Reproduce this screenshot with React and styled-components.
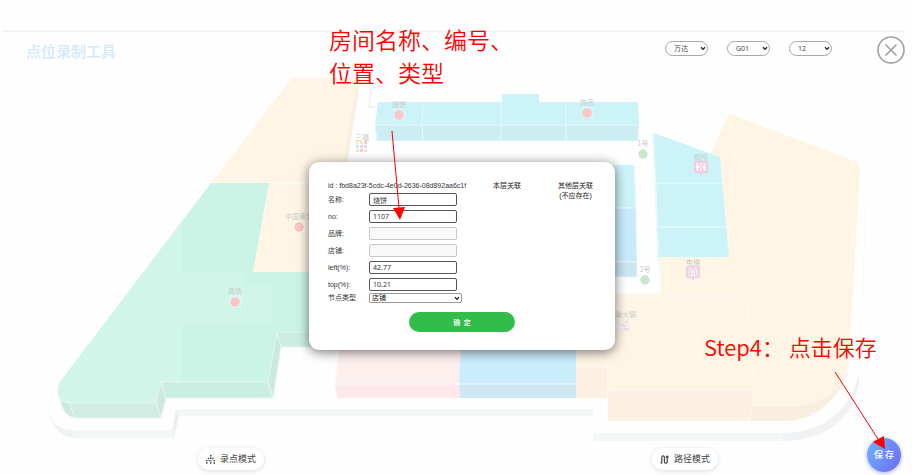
import React from "react";
import styled, { createGlobalStyle, css } from "styled-components";

const GlobalStyle = createGlobalStyle`
  *, *::before, *::after { box-sizing: border-box; }
  body {
    margin: 0;
    background: #fefefe;
    font-family: "Liberation Sans", "Noto Sans CJK SC", sans-serif;
  }
`;

const Page = styled.div`
  position: relative;
  display: flex;
  flex-direction: column;
  min-height: 100vh;
  overflow: hidden;
`;

const layer = css`
  position: absolute;
  inset: 0;
  width: 100%;
  height: 100%;
`;

const FloorMap = styled.svg`
  ${layer}
  font-family: "Noto Sans CJK SC", sans-serif;
  font-size: 7px;
`;

const Arrows = styled.svg`
  ${layer}
  pointer-events: none;
`;

const TopStrip = styled.div`
  height: 32px;
  margin: 0 7px 0 2px;
  border-bottom: 2px solid #f4f4f4;
`;

const Header = styled.header`
  position: relative;
  display: flex;
  align-items: center;
  height: 36px;
  padding: 0 7px 0 26px;
`;

const Title = styled.h1`
  margin: 0 auto 0 0;
  padding-top: 2px;
  font: 500 15px/20px "Noto Sans CJK SC", sans-serif;
  color: #d2e9fc;
`;

const Filters = styled.div`
  display: flex;
  gap: 19px;
  margin-right: 45px;
  padding-bottom: 3px;
`;

const SelectBox = styled.div`
  display: grid;
  align-items: center;
  width: ${(p) => p.$width}px;

  > * { grid-area: 1 / 1; }
  > svg {
    justify-self: end;
    margin-right: 2px;
    pointer-events: none;
  }
`;

const Select = styled.select`
  appearance: none;
  width: 100%;
  height: ${(p) => (p.$pill ? 15 : 10)}px;
  margin: 0;
  padding: 0 10px 0 ${(p) => (p.$pill ? 8 : 2)}px;
  border: 1px solid ${(p) => (p.$pill ? "#a8a8a8" : "#999")};
  border-radius: ${(p) => (p.$pill ? 8 : 2)}px;
  background: #fff;
  color: ${(p) => (p.$pill ? "#444" : "#111")};
  font: 7px/8px "Noto Sans", "Noto Sans CJK SC", sans-serif;
`;

const CloseButton = styled.button`
  display: grid;
  width: 28px;
  height: 28px;
  padding: 0;
  border: 0;
  background: none;
`;

const Main = styled.main`
  position: relative;
  display: flex;
  flex: 1;
  align-items: center;
  justify-content: center;
  padding: 0 0 4px 12px;
`;

const Dialog = styled.form`
  display: flex;
  flex-direction: column;
  width: 306px;
  padding: 19px 19px 18px;
  border-radius: 10px;
  background: #fff;
  box-shadow: 0 2px 12px rgba(0, 0, 0, 0.55);
  color: #333;
  font-size: 7px;
  line-height: 10px;
`;

const Summary = styled.div`
  display: grid;
  grid-template-columns: 165px 62px 1fr;
  height: 10px;
`;

const Relation = styled.span`
  white-space: nowrap;
  text-align: ${(p) => (p.$center ? "center" : "left")};
  color: #222;
`;

const Fields = styled.div`
  display: flex;
  flex-direction: column;
  align-items: flex-start;
`;

const Field = styled.label`
  display: grid;
  grid-template-columns: 41px auto;
  align-items: center;
  height: ${(p) => (p.$compact ? 10 : 17)}px;
`;

const TextInput = styled.input`
  width: 88px;
  height: 13px;
  margin: 0;
  padding: 0 3px;
  border: 1px solid #555;
  border-radius: 2px;
  background: #fff;
  color: #333;
  font: 7px/9px "Noto Sans", "Noto Sans CJK SC", sans-serif;

  &:disabled {
    border-color: #c8c8c8;
    background: #f9f9f9;
  }
`;

const ConfirmButton = styled.button`
  align-self: center;
  width: 106px;
  height: 20px;
  margin-top: 9px;
  padding: 0;
  border: 0;
  border-radius: 10px;
  background: #32bd4b;
  color: #fff;
  font: 500 7px/20px "Noto Sans CJK SC", sans-serif;
`;

const Footer = styled.footer`
  position: relative;
  display: grid;
  grid-template-columns: 1fr 1fr;
  justify-items: center;
  padding: 0 0 5px 4px;
`;

const ModeButton = styled.button`
  display: flex;
  align-items: center;
  gap: 5px;
  height: 22px;
  padding: 0 8px;
  border: 0;
  border-radius: 11px;
  background: #fff;
  box-shadow: 0 1px 4px rgba(90, 130, 150, 0.25);
  color: #444;
  font: 9px/12px "Noto Sans CJK SC", sans-serif;
`;

const SaveButton = styled.button`
  position: absolute;
  right: 11px;
  bottom: 3px;
  width: 34px;
  height: 34px;
  padding: 0;
  border: 0;
  border-radius: 50%;
  background: linear-gradient(120deg, #6fb2fc, #6a6cf5);
  box-shadow: 0 1px 4px rgba(90, 90, 240, 0.5);
  color: #fff;
  font: 500 9px/34px "Noto Sans CJK SC", sans-serif;
`;

const Note = styled.p`
  position: absolute;
  left: ${(p) => p.$left}px;
  top: ${(p) => p.$top}px;
  margin: 0;
  color: #f00;
  font: 350 ${(p) => p.$size}px/33px "Noto Sans CJK SC", sans-serif;
  white-space: nowrap;
`;

const Chevron = () => (
  <svg width="6" height="5" viewBox="0 0 6 5" aria-hidden="true">
    <path d="M1 1.2 3 3.4 5 1.2" fill="none" stroke="#222" strokeWidth="1.3" />
  </svg>
);

function Dropdown({ options, pill, width, ...rest }) {
  return (
    <SelectBox $width={width}>
      <Select $pill={pill} {...rest}>
        {options.map((o) => (
          <option key={o}>{o}</option>
        ))}
      </Select>
      <Chevron />
    </SelectBox>
  );
}

const shops = [
  { x: 399, y: 115, name: "烧饼" },
  { x: 587, y: 113, name: "饰品" },
  { x: 299, y: 227, name: "中国黄金" },
  { x: 235, y: 302, name: "商场" },
];

const gates = [
  { x: 643, y: 154, name: "1号" },
  { x: 645, y: 280, name: "2号" },
];

const MINT =
  "M211 183H269L253 272H322V332H277L268 382H161L156 403H70C59 403 55 392 60 382Z";

const swatches = ["#e7f3b8", "#ffdcc0", "#f7c3e4", "#bfe6fb", "#ffcaca", "#dcd2f4", "#f9e3a9", "#f5c3ea", "#d9ecc4"];

function Map() {
  return (
    <FloorMap viewBox="0 0 912 475" aria-label="楼层地图">
      <defs>
        <clipPath id="mint">
          <path d={MINT} />
        </clipPath>
      </defs>

      <g fill="#f3f7f8">
        <path d="M72 430H172L174 438H74Z" />
        <path d="M176 409H593V416H179Z" />
        <path d="M593 433H783V441H593Z" />
        <path d="M172 430 176 409 179 416 174 438Z" fill="#eeefef" />
        <path d="M51 418C55 426 62 430 72 430L74 438C62 437 54 428 51 418Z" fill="#f0f1f1" />
        <path d="M783 433C826 432 852 408 859 372V384C851 421 826 440 783 441Z" fill="#f0f2f3" />
      </g>
      <g fill="none" stroke="#f9f9f9">
        <path d="M51 418C47 408 50 397 56 390" />
        <path d="M651 91 729 117M860 168Q867 172 867 182L859 372" />
        <path d="M371 88 369 107H375" stroke="#f3f3f3" strokeWidth="2" />
      </g>

      <g stroke="#fcfaf6">
        <path d="M292 78H356L359 85 346 162 330 272H253L269 183H211Z" fill="#fff5e5" />
        <path d="M357 84 359 90 347 164H343Z" fill="#f8eee4" stroke="none" />
        <path d="M269 183H320" strokeWidth="2" />
      </g>

      <path d={MINT} fill="#ccf4e6" />
      <g clipPath="url(#mint)" fill="#d2f5e9">
        <path d="M50 180H182V410H50ZM182 272H244V325H182ZM244 286H271V323H244Z" />
      </g>
      <g fill="#cbeee2" stroke="#e3f7f0">
        <path d="M277 332H322V347H281Z" />
        <path d="M277 332 268 382 273 398 281 347Z" fill="#cce9df" />
        <path d="M161 382H268L273 398H166Z" />
        <path d="M161 382 156 403 161 418 166 398Z" fill="#d0e9e0" />
        <path d="M69 403H156L161 418H75Z" fill="#d1ede3" />
        <path d="M60 399Q64 403 69 403L75 418C66 416 62 410 60 399Z" fill="#cfe8df" />
      </g>

      <g stroke="#e6f9fb">
        <path d="M378 102H502V94H539V102H638L639 125H375Z" fill="#ccf3f8" stroke="none" />
        <path d="M375 125H639L638 141H377Z" fill="#ccedf1" />
        <path d="M423 102 422 125 423 141M501 102V141M566 102V141" fill="none" />
        <path d="M600 165H634L636 208H600Z" fill="#ccf3f8" />
        <path d="M600 208H636L637 262H600Z" fill="#c9eafc" />
        <path d="M600 262H637V277H600Z" fill="#cbe5f1" />
      </g>

      <path d="M729 114 855 161Q860 163 860 170L849 358C846 390 820 407 783 407H752L755 390H608V367H576V294H660L659 257H729L720 157 711 153Z" fill="#fff5e5" />
      <g fill="#fcf0e2">
        <path d="M608 390H755L750 421H608Z" />
        <path d="M576 367H607V398H576Z" />
        <path d="M752 407H783C820 407 846 390 849 360V364C842 398 817 421 783 421H749Z" fill="#faeee0" />
      </g>
      <path d="M600 294H746L755 390H608V350M755 390 749 421M576 367H607M660 257V294" fill="none" stroke="#fcf8f2" strokeWidth="1.5" />

      <g stroke="#e6f9fb">
        <path d="M654 133 720 157 729 257H659Z" fill="#ccf3f8" stroke="none" />
        <path d="M653 133 655 183 659 257 658 262Z" fill="#c6e8ec" />
        <path d="M655 183H722M657 227H726" strokeWidth="1.5" />
      </g>

      <path d="M340 345H461L459 384H335Z" fill="#fdefee" />
      <path d="M335 384H459L460 398H337Z" fill="#fee8ea" />
      <path d="M461 345H576V384H459Z" fill="#caecfc" />
      <path d="M459 384H576V398H460Z" fill="#cde7f3" />
      <path d="M335 384H576" stroke="#f4fafc" />

      <g textAnchor="middle" fill="#c6cbc8">
        {shops.map((s) => (
          <g key={s.name}>
            <rect x={s.x - 6} y={s.y - 7} width="13" height="13" fill="#fff" opacity="0.2" />
            <circle cx={s.x} cy={s.y} r="4.7" fill="#fec5c5" />
            <text x={s.x} y={s.y - 8}>{s.name}</text>
          </g>
        ))}
        {gates.map((g) => (
          <g key={g.name}>
            <circle cx={g.x} cy={g.y} r="4.7" fill="#c9e7cb" />
            <text x={g.x} y={g.y - 8}>{g.name}</text>
          </g>
        ))}
        <text x="362" y="140">三福</text>
        {swatches.map((c, i) => (
          <rect key={c} x={356 + (i % 3) * 4} y={141 + Math.floor(i / 3) * 4} width="3" height="3" rx="1" fill={c} />
        ))}
        <text x="701" y="160">厕所</text>
        <path d="M696 161H706Q708 161 708 163V171Q708 173 706 173H703L701 175 699 173H696Q694 173 694 171V163Q694 161 696 161Z" fill="#f4c9e2" />
        <g fill="#fff">
          <circle cx="697.5" cy="164" r="1.1" />
          <path d="M696 165.500H699L699.500 168H698.500V171H696.500V168H695.500Z" />
          <rect x="700.500" y="162" width="1" height="10" />
          <circle cx="704.500" cy="164" r="1.100" />
          <path d="M703 165.500H706V168.500H705.300V171H703.700V168.500H703Z" />
        </g>
        <text x="693" y="265">电梯</text>
        <path d="M688 266H698Q700 266 700 268V276Q700 278 698 278H695L693 280 691 278H688Q686 278 686 276V268Q686 266 688 266Z" fill="#edcfe6" />
        <path d="M689 276V269H697V276ZM691.500 276V271H694.500V276M693 271V276M690 268 691 267M696 268 695 267" fill="none" stroke="#fff" strokeWidth="0.8" />
        <text x="622" y="317">大渝火锅</text>
        <rect x="617" y="319" width="13" height="13" fill="#f8f0ec" />
        <path d="M622 324 625 327M626 321 627 323M624 329H629" stroke="#dccfca" />
      </g>
    </FloorMap>
  );
}

const inputs = [
  { label: "名称:", value: "烧饼" },
  { label: "no:", value: "1107" },
  { label: "品牌:", value: "", disabled: true },
  { label: "店铺:", value: "", disabled: true },
  { label: "left(%):", value: "42.77" },
  { label: "top(%):", value: "10.21" },
];

export default function App() {
  return (
    <Page>
      <GlobalStyle />
      <Map />
      <TopStrip />
      <Header>
        <Title>点位录制工具</Title>
        <Filters>
          <Dropdown pill width={43} options={["万达"]} aria-label="商场" />
          <Dropdown pill width={43} options={["G01"]} aria-label="楼栋" />
          <Dropdown pill width={43} options={["12"]} aria-label="楼层" />
        </Filters>
        <CloseButton type="button" aria-label="关闭">
          <svg width="28" height="28" viewBox="0 0 28 28" fill="none" stroke="#a0a0a0" strokeWidth="1.6">
            <circle cx="14" cy="14" r="13" />
            <path d="M8.500 8.500 19.500 19.500M19.500 8.500 8.500 19.500" />
          </svg>
        </CloseButton>
      </Header>

      <Main>
        <Dialog onSubmit={(e) => e.preventDefault()}>
          <Summary>
            <span>id : fbd8a23f-5cdc-4e0d-2636-08d892aa6c1f</span>
            <Relation>本层关联</Relation>
            <Relation $center>
              其他层关联
              <br />
              (不应存在)
            </Relation>
          </Summary>
          <Fields>
            {inputs.map((f) => (
              <Field key={f.label}>
                {f.label}
                <TextInput defaultValue={f.value} disabled={f.disabled} />
              </Field>
            ))}
            <Field $compact>
              节点类型
              <Dropdown width={93} options={["店铺"]} />
            </Field>
          </Fields>
          <ConfirmButton type="submit">确&ensp;定</ConfirmButton>
        </Dialog>
      </Main>

      <Footer>
        <ModeButton type="button">
          <svg width="9" height="9" viewBox="0 0 9 9" fill="#444" aria-hidden="true">
            <path d="M4 0H5.500V1.500H4ZM4 2.500H5.500V4H4ZM1.800 2.800H3.200V4.200H1.800ZM6.300 2.800H7.700V4.200H6.300ZM0 5H1.500V6.300H0ZM2.600 5H3.800V6.200H2.600ZM4.400 5H5.600V6.300H4.400ZM7.500 5H9V6.300H7.500ZM0 7.200H1.500V8.700H0ZM4 7.200H5.500V8.700H4ZM7.500 7.200H9V8.700H7.500Z" />
          </svg>
          录点模式
        </ModeButton>
        <ModeButton type="button">
          <svg width="9" height="9" viewBox="0 0 9 9" fill="none" stroke="#444" strokeWidth="1.200" aria-hidden="true">
            <path d="M.3 8H1.800V2.300Q1.800 .8 3.100 .8T4.400 2.300V6.700Q4.400 8.200 5.800 8.200T7.200 6.700V1.500M5.800 2.400 7.200 1 8.600 2.400" />
          </svg>
          路径模式
        </ModeButton>
      </Footer>
      <SaveButton type="button">保 存</SaveButton>

      <Arrows viewBox="0 0 912 475" fill="#f00" stroke="#f00" aria-hidden="true">
        <path d="M392 131 399 208M835 372 878 439" />
        <path d="M393 208 405 207 400 220ZM873 442 884 436 885 449Z" stroke="none" />
      </Arrows>
      <Note $left={329} $top={23} $size={23}>
        房间名称、编号、
        <br />
        位置、类型
      </Note>
      <Note $left={704} $top={330} $size={22}>Step4： 点击保存</Note>
    </Page>
  );
}
